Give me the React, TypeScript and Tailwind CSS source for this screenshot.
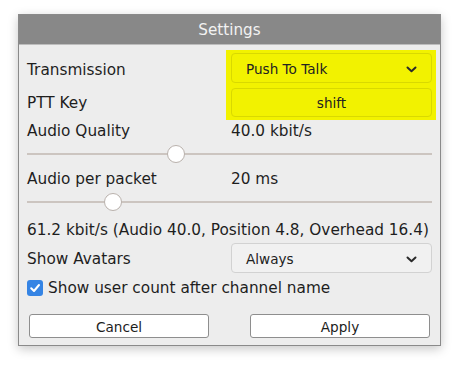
import * as React from "react";

// ─── Small pieces ─────────────────────────────────────────────────────────────

function Chevron() {
  return (
    <svg width="11" height="7" viewBox="0 0 11 7" className="shrink-0">
      <path d="M1.5 1.5 L5.5 5.2 L9.5 1.5" fill="none" stroke="#2a2a2a" strokeWidth="2" strokeLinecap="round" strokeLinejoin="round" />
    </svg>
  );
}

function Combo({ value, highlight = false }: { value: string; highlight?: boolean }) {
  return (
    <div
      className={
        "flex h-[30px] items-center justify-between rounded-[4px] border pl-[14px] pr-[14px] pt-[2px] text-[13.6px] text-[#222] " +
        (highlight ? "border-[#d9d900] bg-[#f2f200]" : "border-[#d2d2d2] bg-[#f1f1f1]")
      }
    >
      <span>{value}</span>
      <Chevron />
    </div>
  );
}

function Slider({ pos }: { pos: number }) {
  return (
    <div className="relative flex h-[28px] items-center">
      <div className="h-[2px] w-full bg-[#ccc5c0]" />
      <div
        className="absolute top-[5px] h-[18px] w-[18px] rounded-full border border-[#b9b1ac] bg-white"
        style={{ left: pos - 9 }}
      />
    </div>
  );
}

function Button({ label }: { label: string }) {
  return (
    <div className="flex h-[24px] w-[180px] items-center justify-center rounded-[3px] border border-[#8e8e8e] bg-white pt-[2px] text-[13.6px] text-[#1c1c1c]">
      {label}
    </div>
  );
}

// ─── Dialog ───────────────────────────────────────────────────────────────────

export default function App() {
  return (
    <div className="h-[371px] w-[461px] bg-white pl-[18px] pt-[14px] font-['DejaVu_Sans',sans-serif]">
      <div className="w-[423px] border border-[#8a8a8a] bg-[#ededed] shadow-[0_3px_10px_rgba(0,0,0,0.22)]">
        {/* title */}
        <div className="flex h-[30px] items-center justify-center border-b border-[#bdbdbd] bg-[#888888] pt-[2px] text-[15.2px] text-[#f2f2f2]">
          Settings
        </div>

        <div className="px-[8px] pb-[7px] pt-[5px] text-[15.3px] text-[#1e1e1e]">
          {/* transmission + ptt */}
          <div className="flex">
            <div className="flex w-[204px] flex-col pt-[3px]">
              <div className="flex h-[30px] items-center pt-[4px]">Transmission</div>
              <div className="mt-[5px] flex h-[29px] items-center pt-[2px]">PTT Key</div>
            </div>
            <div className="-ml-[5px] -mr-[4px] flex-1 bg-[#f2f200] pb-[3px] pl-[5px] pr-[4px] pt-[3px]">
              <Combo value="Push To Talk" highlight />
              <div className="mt-[5px] flex h-[29px] items-center justify-center rounded-[4px] border border-[#d9d900] pt-[2px] text-[13.6px] text-[#222]">
                shift
              </div>
            </div>
          </div>

          {/* audio quality */}
          <div className="mt-[2px] flex h-[18px] items-center pt-[1px]">
            <span className="w-[204px]">Audio Quality</span>
            <span>40.0 kbit/s</span>
          </div>
          <Slider pos={149} />

          {/* audio per packet */}
          <div className="mt-[2px] flex h-[18px] items-center pt-[1px]">
            <span className="w-[204px]">Audio per packet</span>
            <span>20 ms</span>
          </div>
          <Slider pos={86} />

          <div className="mt-[5px] flex h-[18px] items-center pt-[1px]">
            61.2 kbit/s (Audio 40.0, Position 4.8, Overhead 16.4)
          </div>

          {/* avatars */}
          <div className="mt-[4px] flex items-center">
            <span className="w-[204px] pt-[2px]">Show Avatars</span>
            <div className="flex-1">
              <Combo value="Always" />
            </div>
          </div>

          {/* checkbox */}
          <div className="mt-[6px] flex h-[18px] items-center gap-[5px]">
            <div className="flex h-[16px] w-[16px] items-center justify-center rounded-[3px] bg-[#3584e4]">
              <svg width="12" height="12" viewBox="0 0 12 12">
                <path d="M2.2 6.2 L5 9 L10 3" fill="none" stroke="#fff" strokeWidth="2" strokeLinecap="round" strokeLinejoin="round" />
              </svg>
            </div>
            <span className="pt-[1px]">Show user count after channel name</span>
          </div>

          {/* actions */}
          <div className="mt-[17px] flex justify-between px-[2px]">
            <Button label="Cancel" />
            <Button label="Apply" />
          </div>
        </div>
      </div>
    </div>
  );
}
